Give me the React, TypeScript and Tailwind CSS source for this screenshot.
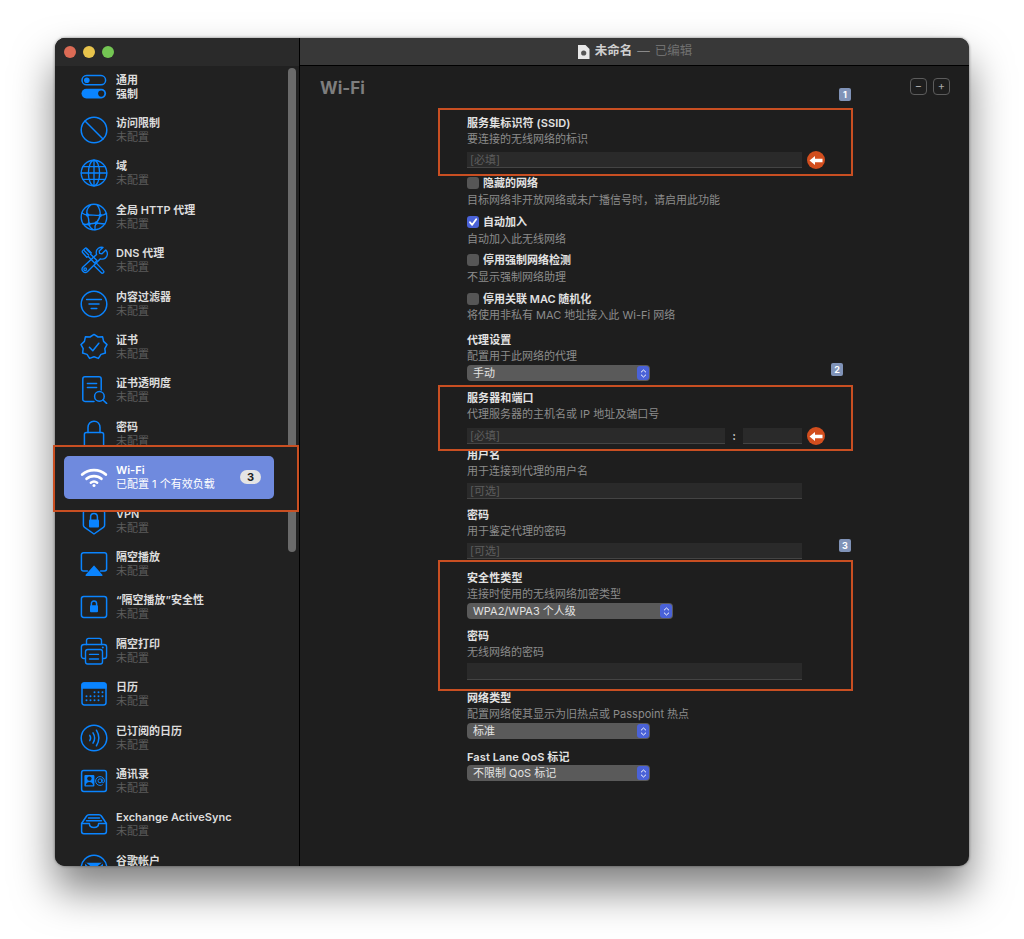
import type { ReactNode } from 'react'

const BLUE = '#0a84ff'

function Ico({ children, color = BLUE, sw = 1.5 }: { children: ReactNode; color?: string; sw?: number }) {
  return (
    <svg viewBox="0 0 28 28" fill="none" stroke={color} strokeWidth={sw} strokeLinecap="round" strokeLinejoin="round" className="w-7 h-7 shrink-0">
      {children}
    </svg>
  )
}

const icons: Record<string, ReactNode> = {
  general: (
    <Ico>
      <rect x="2" y="2.6" width="23.6" height="9.2" rx="4.6" />
      <circle cx="6.8" cy="7.2" r="2.8" fill={BLUE} stroke="none" />
      <rect x="1.5" y="15.8" width="24.6" height="9.6" rx="4.8" fill={BLUE} stroke="none" />
      <circle cx="21.2" cy="20.6" r="3.1" fill="#212121" stroke="none" />
    </Ico>
  ),
  restrict: (
    <Ico>
      <circle cx="14" cy="14" r="12.8" />
      <path d="M5 5l18 18" />
    </Ico>
  ),
  domain: (
    <Ico sw={1.35}>
      <circle cx="14" cy="14" r="12.8" />
      <ellipse cx="14" cy="14" rx="5.6" ry="12.8" />
      <path d="M14 1.2v25.6M1.2 14h25.6M3.2 7.6h21.6M3.2 20.4h21.6" />
    </Ico>
  ),
  proxy: (
    <Ico sw={1.35}>
      <circle cx="14" cy="14" r="12.8" />
      <path d="M11 1.6C7.400 5 6 9 7.500 12c1 2.500 1.500 6 1.500 9 .2 2 1.500 4 4 5.600" />
      <path d="M17 1.600c2 3 3.400 7 3.200 10-.2 3-2 6-4 8.400-1.200 2-1.600 4.400-1.200 6.800" />
      <path d="M2 10c2 1.400 4 2 5.500 2 4-.2 8 .6 12.700.4 2.500 0 4.800-.8 6.400-2" />
      <path d="M3 21c2 .8 4 .6 6 0 2-.4 5-.6 7.200-1 3.400 .6 6 .8 8.600 1" />
      <circle cx="7.500" cy="12" r="1.700" fill={BLUE} stroke="none" />
      <circle cx="20.200" cy="12.400" r="1.700" fill={BLUE} stroke="none" />
      <circle cx="9" cy="21" r="1.700" fill={BLUE} stroke="none" />
      <circle cx="16.200" cy="20" r="1.700" fill={BLUE} stroke="none" />
    </Ico>
  ),
  dns: (
    <Ico sw={1.35}>
      <path d="M2.800 4.600L5 2.400c.6-.6 1.200-.6 1.800 0l4.400 4.400-.6 1.400L17 14.600l-2.400 2.400-6.400-6.400-1.400.6-4-4.400c-.8-.8-.8-1.600 0-2.200z" />
      <path d="M4.400 4.800l4.200 4.200M6.800 3.600l3 3" />
      <path d="M25.800 4l-3.800 3.800-2.400-.4-.4-2.400 3.800-3.600c-3.400-.8-6.800 1.400-6.800 5 0 .8.2 1.400.4 2L3 21c-2.800 3 1.600 7.400 4.600 4.400L20.400 12.800c3.600 1.200 7-1.400 7-5 0-1.400-.6-2.800-1.600-3.800z" />
      <circle cx="5.200" cy="23.200" r="1.300" />
      <path d="M16.600 17.400l6.600 7c1 1 .9 1.800.2 2.400-.8.6-1.600.6-2.400-.2l-6.800-6.800" />
    </Ico>
  ),
  filter: (
    <Ico>
      <circle cx="14" cy="14" r="12.8" />
      <path d="M6.600 9.600h14.800M9 14h10M11.200 18.400h5.600" />
    </Ico>
  ),
  cert: (
    <Ico>
      <path d="M14 1.400l4 2.600 4.600-.2 1 4.600 3.400 3.200-2.200 4 .6 4.400-4.400 1.400-2.600 4-4.400-1.600-4.400 1.600-2.600-4-4.400-1.400.6-4.400L1 11.600l3.400-3.200 1-4.600 4.600.2z" />
      <path d="M9.400 14.200l3.400 3.600 6-7.600" />
    </Ico>
  ),
  ct: (
    <Ico>
      <path d="M14 25.400H5c-1.400 0-2.200-.8-2.200-2.200V3c0-1.400.8-2.200 2.200-2.200h14c1.400 0 2.200.8 2.200 2.200v11" />
      <path d="M7.400 7.600h9.200M7.400 11.600h9.200" />
      <circle cx="19.400" cy="20.400" r="4.800" />
      <path d="M23 24l3.600 3.400" />
    </Ico>
  ),
  lock: (
    <Ico>
      <path d="M8 12.400V7.600C8 3.800 10.400 1.200 14 1.200s6 2.600 6 6.400v4.800" />
      <rect x="4.400" y="12.400" width="19.200" height="15" rx="2" />
    </Ico>
  ),
  wifi: (
    <svg viewBox="0 0 28 28" fill="none" stroke="#ffffff" strokeLinecap="round" className="w-7 h-7 shrink-0">
      <path d="M2.200 11.600C8.600 5.600 19.400 5.600 25.800 11.600" strokeWidth="2.800" />
      <path d="M6.600 15.800c4-3.600 10.800-3.600 14.800 0" strokeWidth="2.800" />
      <path d="M10.800 19.800c1.800-1.400 4.600-1.400 6.400 0" strokeWidth="2.400" />
      <circle cx="14" cy="22.400" r="1.500" fill="#ffffff" stroke="none" />
    </svg>
  ),
  vpn: (
    <Ico>
      <path d="M14 1.200l9.800 3.200c.6.200.8.600.8 1.200v12.600c0 1-.4 1.600-1.200 2.200L14 27l-9.400-6.600c-.8-.6-1.200-1.200-1.200-2.200V5.600c0-.6.200-1 .8-1.200z" />
      <path d="M10.600 12.600V10c0-2.200 1.400-3.600 3.400-3.600s3.400 1.400 3.400 3.600v2.600" />
      <rect x="9" y="12.400" width="10" height="8" rx="1" fill={BLUE} stroke="none" />
    </Ico>
  ),
  airplay: (
    <Ico>
      <path d="M7.400 21H3.600c-1.400 0-2.200-.8-2.200-2.200V5c0-1.400.8-2.200 2.200-2.200h20.800c1.400 0 2.200.8 2.200 2.200v13.800c0 1.400-.8 2.200-2.200 2.200h-3.800" />
      <path d="M14 16.400L21.800 25.200H6.200z" fill={BLUE} stroke={BLUE} />
    </Ico>
  ),
  airplaySec: (
    <Ico>
      <rect x="1.400" y="3.400" width="25.200" height="21" rx="2.400" />
      <path d="M11.400 12.400v-1.800c0-1.600 1-2.600 2.600-2.600s2.600 1 2.600 2.600v1.800" />
      <rect x="10" y="12.200" width="8" height="7" rx="1" fill={BLUE} stroke="none" />
    </Ico>
  ),
  print: (
    <Ico sw={1.4}>
      <path d="M6.500 7.500V3.600c0-1.400.8-2.200 2.200-2.200h10.600c1.400 0 2.200.8 2.200 2.200v3.900" />
      <path d="M5.500 21.500H4c-1.600 0-2.600-1-2.600-2.600V10.100c0-1.600 1-2.600 2.600-2.600h20c1.600 0 2.600 1 2.600 2.600v8.800c0 1.600-1 2.600-2.600 2.600h-1.500" />
      <rect x="5.500" y="12.500" width="17" height="14.500" rx="2.200" fill="#212121" />
      <path d="M9.500 17.400h9M9.500 22h9" />
      <circle cx="22.800" cy="10.600" r="1" fill={BLUE} stroke="none" />
    </Ico>
  ),
  cal: (
    <Ico>
      <rect x="2" y="3" width="24" height="22" rx="2.400" />
      <path d="M2 8V5.400C2 4 3 3 4.400 3h19.200C25 3 26 4 26 5.400V8z" fill={BLUE} />
      <g fill={BLUE} stroke="none">
        <circle cx="14.500" cy="12.300" r="1" /><circle cx="18.500" cy="12.300" r="1" /><circle cx="22.500" cy="12.300" r="1" />
        <circle cx="6.500" cy="16.300" r="1" /><circle cx="10.500" cy="16.300" r="1" /><circle cx="14.500" cy="16.300" r="1" /><circle cx="18.500" cy="16.300" r="1" /><circle cx="22.500" cy="16.300" r="1" />
        <circle cx="6.500" cy="20.300" r="1" /><circle cx="10.500" cy="20.300" r="1" /><circle cx="14.500" cy="20.300" r="1" /><circle cx="18.500" cy="20.300" r="1" />
      </g>
    </Ico>
  ),
  subCal: (
    <Ico>
      <circle cx="14" cy="14" r="12.800" />
      <path d="M9.800 11.400c1 1.600 1 3.600 0 5.200M13 8.800c2 3.200 2 7.200 0 10.400M16.400 6.200c3 4.800 3 10.800 0 15.600" />
    </Ico>
  ),
  contacts: (
    <Ico>
      <rect x="1.600" y="3.600" width="24.800" height="20.800" rx="2.200" />
      <rect x="4.400" y="8" width="10" height="11.600" rx="1" fill={BLUE} stroke="none" />
      <circle cx="9.400" cy="11.600" r="2.200" fill="#212121" stroke="none" />
      <path d="M5.800 18.200c.4-2.400 1.800-3.200 3.600-3.200s3.200.8 3.600 3.200z" fill="#212121" stroke="none" />
      <circle cx="20" cy="13.800" r="2" strokeWidth="1" />
      <path d="M22 11.800v3c0 1.600 2.400 1.400 2.400-.8 0-2.800-2-4.400-4.400-4.400-2.600 0-4.400 2-4.400 4.400s1.800 4.400 4.400 4.400c1 0 1.800-.2 2.400-.6" strokeWidth="1" />
    </Ico>
  ),
  exchange: (
    <Ico>
      <path d="M1.600 13.500l5-7.500C7.200 5 8 4.700 9 4.700h10c1 0 1.800.3 2.400 1.300l5 7.500v8c0 1.400-.8 2.200-2.200 2.200H3.800c-1.400 0-2.200-.8-2.200-2.200z" />
      <path d="M1.600 13.500h7.800c0 2.400 2 4 4.600 4s4.600-1.600 4.600-4h7.800" />
      <path d="M8.500 8h11M6.500 10.800h15" />
    </Ico>
  ),
  google: (
    <Ico>
      <circle cx="14" cy="14" r="12.800" />
      <path d="M5.800 9.400h16.400v10H5.800z" fill={BLUE} />
      <path d="M5.800 9.400L14 16l8.200-6.600" stroke="#212121" />
    </Ico>
  ),
}

const payloads = [
  ['general', '通用', '强制'],
  ['restrict', '访问限制', '未配置'],
  ['domain', '域', '未配置'],
  ['proxy', '全局 HTTP 代理', '未配置'],
  ['dns', 'DNS 代理', '未配置'],
  ['filter', '内容过滤器', '未配置'],
  ['cert', '证书', '未配置'],
  ['ct', '证书透明度', '未配置'],
  ['lock', '密码', '未配置'],
  ['wifi', 'Wi-Fi', '已配置 1 个有效负载'],
  ['vpn', 'VPN', '未配置'],
  ['airplay', '隔空播放', '未配置'],
  ['airplaySec', '“隔空播放”安全性', '未配置'],
  ['print', '隔空打印', '未配置'],
  ['cal', '日历', '未配置'],
  ['subCal', '已订阅的日历', '未配置'],
  ['contacts', '通讯录', '未配置'],
  ['exchange', 'Exchange ActiveSync', '未配置'],
  ['google', '谷歌帐户', '未配置'],
]

function SideRow({ icon, title, sub }: { icon: string; title: string; sub: string }) {
  if (icon === 'wifi') {
    return (
      <div className="relative z-10 h-[43.4px]">
        <div className="absolute -left-[2px] -top-[11px] w-[246px] h-[67px] border-2 border-[#c94f22] bg-[#212121]" />
        <div className="absolute left-[9px] top-0 w-[210px] h-[43px] rounded-[5px] bg-[#6f8ade] flex items-center pl-[16px] gap-2">
          {icons.wifi}
          <div className="w-[110px] shrink-0 text-white">
            <div className="h-[14px] leading-[14px] font-semibold">{title}</div>
            <div className="h-[14px] leading-[14px] whitespace-nowrap">{sub}</div>
          </div>
          <span className="ml-[6px] w-[21px] h-[14px] rounded-full bg-[#e4e4e4] text-[#222] font-bold text-[11px] leading-[14px] text-center">3</span>
        </div>
      </div>
    )
  }
  return (
    <div className="h-[43.4px] flex items-center pl-[25px] gap-2">
      {icons[icon]}
      <div className="w-[117px] overflow-hidden whitespace-nowrap">
        <div className="h-[14px] leading-[14px] font-semibold text-[#dcdcdc]">{title}</div>
        <div className={`h-[14px] leading-[14px] ${icon === 'general' ? 'font-semibold text-[#dcdcdc]' : 'text-[#5c5c5c]'}`}>{sub}</div>
      </div>
    </div>
  )
}

function Title({ children }: { children: ReactNode }) {
  return <div className="h-4 leading-4 font-semibold text-[#e2e2e2] tracking-[0.1px]">{children}</div>
}

function Sub({ children }: { children: ReactNode }) {
  return <div className="h-4 leading-4 text-[#8c8c8c] whitespace-nowrap">{children}</div>
}

function Input({ placeholder, className }: { placeholder?: string; className: string }) {
  return (
    <div className={`bg-[#2a2a2a] border-b border-[#444] px-[3px] leading-[16px] text-[#5e5e5e] ${className}`}>
      {placeholder}
    </div>
  )
}

function ArrowBtn() {
  return (
    <span className="w-[18px] h-[18px] rounded-full bg-[#d24e1e] flex items-center justify-center">
      <svg viewBox="0 0 14 10" className="w-[14px] h-[11px]" fill="#ffffff">
        <path d="M0.500 5L6 0.600V3.200H13.500V6.800H6V9.400z" />
      </svg>
    </span>
  )
}

function Select({ label, className }: { label: string; className: string }) {
  return (
    <div className={`h-4 rounded-[4px] bg-[#5a5a5a] flex items-center justify-between pl-[6px] pr-px text-[#e2e2e2] leading-4 ${className}`}>
      <span>{label}</span>
      <span className="w-[12px] h-[14px] rounded-[3px] bg-[#4a62d8] flex items-center justify-center">
        <svg viewBox="0 0 8 12" className="w-[7px] h-[11px]" fill="none" stroke="#ffffff" strokeWidth="1.100" strokeLinecap="round" strokeLinejoin="round">
          <path d="M1.500 4.300L4 2l2.500 2.300M1.500 7.700L4 10l2.500-2.300" />
        </svg>
      </span>
    </div>
  )
}

function Check({ on, label }: { on?: boolean; label: string }) {
  return (
    <div className="h-4 flex items-center gap-[4px]">
      <span className={`w-3 h-3 rounded-[3px] flex items-center justify-center ${on ? 'bg-[#4a62d8]' : 'bg-[#565656]'}`}>
        {on && (
          <svg viewBox="0 0 12 12" className="w-3 h-3" fill="none" stroke="#ffffff" strokeWidth="1.800" strokeLinecap="round" strokeLinejoin="round">
            <path d="M3 6.300l2.200 2.500L9.200 3.300" />
          </svg>
        )}
      </span>
      <span className="font-semibold text-[#e2e2e2] leading-4">{label}</span>
    </div>
  )
}

function Marker({ n, className }: { n: number; className: string }) {
  return (
    <span className={`absolute w-3 h-[13px] rounded-[2px] bg-[#8093b8] text-white text-[9px] font-bold leading-[13px] text-center ${className}`}>
      {n}
    </span>
  )
}

function Box({ className, children }: { className: string; children: ReactNode }) {
  return (
    <div className={`relative z-10 w-[415px] -ml-[29px] pl-[27px] border-2 border-[#c94f22] bg-[#1e1e1e] ${className}`}>
      {children}
    </div>
  )
}

export default function App() {
  return (
    <div className="min-h-[939px] bg-white pt-[38px] pl-[55px] font-['Inter','Noto_Sans_CJK_SC',sans-serif] text-[11px]">
      <div className="w-[914px] h-[828px] rounded-[10px] bg-[#1e1e1e] flex shadow-[0_24px_42px_rgba(0,0,0,0.5),0_0_3px_rgba(0,0,0,0.5)]">
        {/* sidebar */}
        <aside className="relative w-[245px] shrink-0 h-full flex flex-col rounded-l-[10px] bg-[#212121] border-r border-black">
          <div className="h-[28px] shrink-0 rounded-tl-[10px] bg-[#2a2a2a] flex items-center gap-[7px] pl-[9px]">
            <span className="w-3 h-3 rounded-full bg-[#dc6b55]" />
            <span className="w-3 h-3 rounded-full bg-[#e8c44c]" />
            <span className="w-3 h-3 rounded-full bg-[#74c653]" />
          </div>
          <span className="absolute left-[233px] top-[30px] w-2 h-[484px] rounded-full bg-[#6a6a6a]" />
          <div className="relative flex-1 min-h-0 overflow-y-clip">
            <div className="-mt-px">
              {payloads.map(p => (
                <SideRow key={p[0]} icon={p[0]} title={p[1]} sub={p[2]} />
              ))}
            </div>
          </div>
        </aside>

        {/* main */}
        <main className="flex-1 min-w-0 h-full flex flex-col">
          <div className="h-[28px] shrink-0 rounded-tr-[10px] bg-[#383838] border-b border-black flex items-center justify-center gap-[5px]">
            <svg viewBox="0 0 13 14" className="w-[13px] h-[14px]">
              <path d="M1 0h7.500L12.500 4v10H1z" fill="#e8e8e8" />
              <circle cx="6.700" cy="8" r="2.600" fill="#555" />
            </svg>
            <span className="text-[12.500px] font-semibold text-[#cfcfcf]">未命名</span>
            <span className="text-[12.500px] text-[#8a8a8a]">—</span>
            <span className="text-[12.500px] text-[#707070]">已编辑</span>
          </div>

          <div className="h-[42px] shrink-0 flex justify-between pl-[20px] pr-[19px]">
            <h1 className="mt-[9px] text-[17px] leading-[26px] font-bold text-[#7e7e7e]">Wi-Fi</h1>
            <div className="flex gap-[6px] mt-[12px]">
              <span className="w-[17px] h-[17px] rounded-[4px] border border-[#5c5c5c] text-[#aaa] leading-[14px] text-center">−</span>
              <span className="w-[17px] h-[17px] rounded-[4px] border border-[#5c5c5c] text-[#aaa] leading-[14px] text-center">+</span>
            </div>
          </div>

          <div className="relative ml-[167px] w-[386px]">
            <Marker n={1} className="left-[372px] -top-[20px]" />
            <Box className="h-[68px] pt-[5px]">
              <Title>服务集标识符 (SSID)</Title>
              <Sub>要连接的无线网络的标识</Sub>
              <div className="flex items-center gap-[5px] mt-[4px]">
                <Input placeholder="[必填]" className="w-[335px] h-[16px]" />
                <ArrowBtn />
              </div>
            </Box>

            <div className="-mt-px"><Check label="隐藏的网络" /></div>
            <div className="mt-px"><Sub>目标网络非开放网络或未广播信号时，请启用此功能</Sub></div>
            <div className="mt-[6px]"><Check on label="自动加入" /></div>
            <div className="mt-px"><Sub>自动加入此无线网络</Sub></div>
            <div className="mt-[5px]"><Check label="停用强制网络检测" /></div>
            <div className="mt-px"><Sub>不显示强制网络助理</Sub></div>
            <div className="mt-[6px]"><Check label="停用关联 MAC 随机化" /></div>
            <Sub>将使用非私有 MAC 地址接入此 Wi-Fi 网络</Sub>

            <div className="mt-[9px]"><Title>代理设置</Title></div>
            <Sub>配置用于此网络的代理</Sub>
            <Select label="手动" className="w-[183px] mt-px" />
            <Marker n={2} className="left-[364px] top-[255px]" />

            <Box className="h-[66px] pt-[3px] mt-[4px]">
              <Title>服务器和端口</Title>
              <Sub>代理服务器的主机名或 IP 地址及端口号</Sub>
              <div className="flex items-center mt-[5px]">
                <Input placeholder="[必填]" className="w-[258px] h-[16px]" />
                <span className="w-[18px] text-center font-bold text-[#ddd]">:</span>
                <Input className="w-[59px] h-[16px]" />
                <span className="ml-[5px]"><ArrowBtn /></span>
              </div>
            </Box>

            <div className="-mt-[4px]"><Title>用户名</Title></div>
            <Sub>用于连接到代理的用户名</Sub>
            <Input placeholder="[可选]" className="w-[335px] h-[16px] mt-[4px]" />
            <div className="mt-[8px]"><Title>密码</Title></div>
            <Sub>用于鉴定代理的密码</Sub>
            <Input placeholder="[可选]" className="w-[335px] h-[16px] mt-[4px]" />
            <Marker n={3} className="left-[372px] top-[431px]" />

            <Box className="h-[131px] pt-[8px] mt-px">
              <Title>安全性类型</Title>
              <Sub>连接时使用的无线网络加密类型</Sub>
              <Select label="WPA2/WPA3 个人级" className="w-[206px] mt-px" />
              <div className="mt-[9px]"><Title>密码</Title></div>
              <Sub>无线网络的密码</Sub>
              <Input className="w-[335px] h-[17px] mt-[3px]" />
            </Box>

            <div className="-mt-px"><Title>网络类型</Title></div>
            <Sub>配置网络使其显示为旧热点或 Passpoint 热点</Sub>
            <Select label="标准" className="w-[183px] mt-px" />
            <div className="mt-[10px]"><Title>Fast Lane QoS 标记</Title></div>
            <Select label="不限制 QoS 标记" className="w-[183px]" />
          </div>
        </main>
      </div>
    </div>
  )
}
